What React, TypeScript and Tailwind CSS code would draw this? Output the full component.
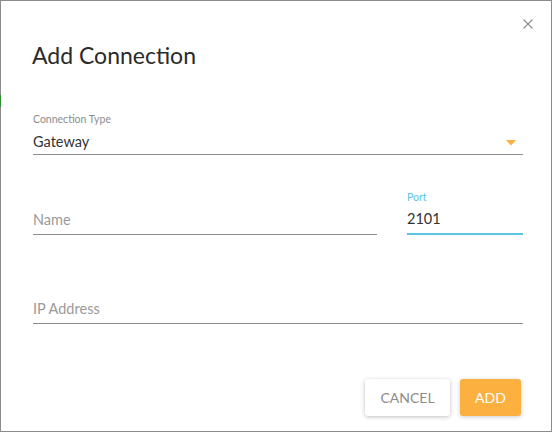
import React from "react";

const font = { fontFamily: "Lato, 'Noto Sans', sans-serif" };

function CloseIcon() {
  return (
    <svg width="10" height="10" viewBox="0 0 10 10" className="block">
      <path d="M0.5 0.5 L9.5 9.5 M9.5 0.5 L0.5 9.5" stroke="#8c8c8c" strokeWidth="1.1" fill="none" />
    </svg>
  );
}

function Caret() {
  return (
    <svg width="10" height="6" viewBox="0 0 10 6" className="block">
      <path d="M0 0 H10 L5 5.5 Z" fill="#fbb040" />
    </svg>
  );
}

export default function App() {
  return (
    <div
      style={font}
      className="relative flex h-[432px] w-[552px] flex-col border border-[#8c8c8c] bg-white text-[#333]"
    >
      {/* sliver of the page behind the dialog */}
      <span className="absolute -left-px top-[94px] h-[12px] w-px bg-[#2e8b2e]" />

      <button className="absolute right-[18px] top-[18px]">
        <CloseIcon />
      </button>

      <h1 className="ml-[31px] mt-[39px] text-[23px] leading-[30px] text-[#2b2b2b]">Add Connection</h1>

      <div className="ml-[32px] mr-[28px] mt-[43px] flex flex-col">
        {/* connection type */}
        <div className="border-b border-[#8c8c8c]">
          <div className="text-[10.5px] leading-[12px] text-[#8c8c8c]">Connection Type</div>
          <div className="mt-[7px] flex h-[22px] items-center justify-between pb-[3px]">
            <span className="text-[14.5px] leading-[16px]">Gateway</span>
            <span className="mr-[7px] mt-[2px]">
              <Caret />
            </span>
          </div>
        </div>

        {/* name + port */}
        <div className="mt-[36px] flex items-end gap-[30px]">
          <div className="flex-1 border-b border-[#8c8c8c] pb-[6px]">
            <div className="text-[14.5px] leading-[16px] text-[#9a9a9a]">Name</div>
          </div>
          <div className="w-[116px] border-b-2 border-[#5bc3e4]">
            <div className="text-[10.5px] leading-[12px] text-[#5bc3e4]">Port</div>
            <div className="mt-[8px] pb-[6px] text-[14.5px] leading-[16px]">2101</div>
          </div>
        </div>

        {/* ip address */}
        <div className="mt-[66px] border-b border-[#8c8c8c] pb-[6px]">
          <div className="text-[14.5px] leading-[16px] text-[#9a9a9a]">IP Address</div>
        </div>
      </div>

      <div className="mb-[15px] mr-[30px] mt-auto flex justify-end gap-[10px]">
        <button className="h-[37px] w-[85px] rounded-[3px] bg-white text-[14px] text-[#8c8c8c] shadow-[0_1px_4px_rgba(0,0,0,0.25)]">
          CANCEL
        </button>
        <button className="h-[37px] w-[61px] rounded-[3px] bg-[#fbb040] text-[14px] text-white shadow-[0_1px_4px_rgba(0,0,0,0.2)]">
          ADD
        </button>
      </div>
    </div>
  );
}
